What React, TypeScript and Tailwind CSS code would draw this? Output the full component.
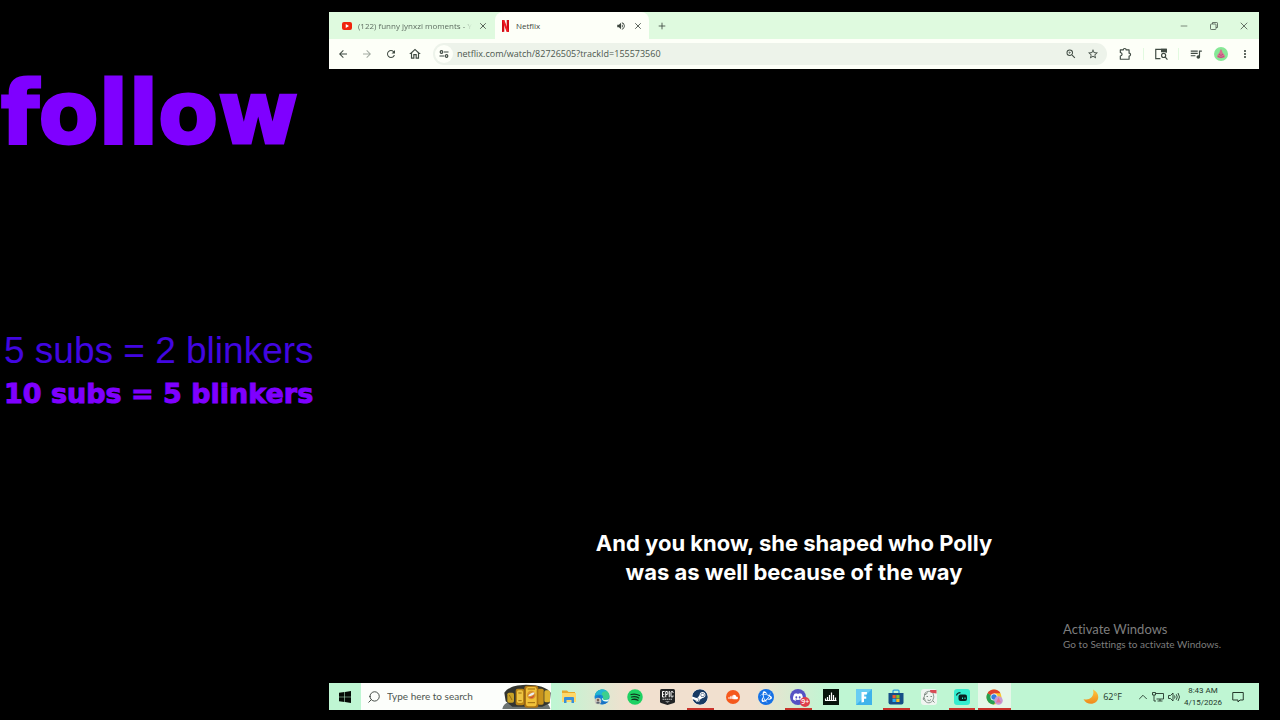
import type { ReactNode } from "react";
import {
  MdArrowBack,
  MdArrowForward,
  MdMoreVert,
  MdOutlineHome,
  MdQueueMusic,
  MdRefresh,
  MdStarBorder,
  MdVolumeUp,
  MdZoomIn,
} from "react-icons/md";
import { FaSoundcloud, FaSteam } from "react-icons/fa";
import { SiBattledotnet, SiDiscord } from "react-icons/si";
import { ChevronUp, Minus, Plus, Search, X } from "lucide-react";

type TaskbarApp = {
  name: string;
  icon: ReactNode;
  running?: boolean;
  active?: boolean;
};

function YoutubeIcon() {
  return (
    <svg viewBox="0 0 20 16" className="h-2 w-2.5 shrink-0">
      <rect width="20" height="16" rx="4" fill="#f0240c" />
      <path d="M7.5 4.2v7.6L14 8z" fill="#fff" />
    </svg>
  );
}

function NetflixIcon() {
  return (
    <svg viewBox="0 0 14 24" className="h-3 w-[7px] shrink-0">
      <path d="M0 0h4.6v23.4L0 24zM9.4 0H14v24l-4.6-.6z" fill="#d00a14" />
      <path d="M0 0h4.6L14 24l-4.8-.6z" fill="#f01a22" />
    </svg>
  );
}

function SiteInfoIcon() {
  return (
    <svg viewBox="0 0 20 20" className="size-2.5" fill="none" stroke="#3f4a42" strokeWidth="2.4">
      <circle cx="5" cy="6" r="2.6" />
      <path d="M10 6h9M1 14h9" />
      <circle cx="15" cy="14" r="2.6" />
    </svg>
  );
}

function ExtensionsIcon() {
  return (
    <svg viewBox="0 0 24 24" className="size-3.5" fill="none" stroke="#3f4a42" strokeWidth="2">
      <path d="M4 5h5a2.5 2.5 0 0 1 5 0h5v5.5a2.5 2.5 0 0 1 0 5V21H4v-5.5q3-.5 3-3t-3-3z" strokeLinejoin="round" />
    </svg>
  );
}

function SidePanelSearchIcon() {
  return (
    <svg viewBox="0 0 24 24" className="size-3.5" fill="none" stroke="#3f4a42" strokeWidth="2">
      <path d="M11 20H3V4h18v6" />
      <path d="M13 4h8v4h-8z" fill="#3f4a42" />
      <circle cx="16.5" cy="14.5" r="3.5" />
      <path d="m19 17 4 4.5" />
    </svg>
  );
}

function AvatarIcon() {
  return (
    <svg viewBox="0 0 28 28" className="size-3.5">
      <circle cx="14" cy="14" r="14" fill="#86e896" />
      <path d="M14 4c2 3 2.5 4.5 3 7 3 3 5 6 5 9-4 3-12 3-16 0 0-3 2-6 5-9 .5-2.5 1-4 3-7z" fill="#d9708f" />
      <path d="M10 14l4 3 4-3M8 19l6 2 6-2" stroke="#a94d78" strokeWidth="1.5" fill="none" />
    </svg>
  );
}

function RestoreIcon() {
  return (
    <svg viewBox="0 0 16 16" className="size-2" fill="none" stroke="#4a554c" strokeWidth="1.6">
      <rect x="1" y="4" width="11" height="11" rx="1.5" />
      <path d="M5 4V1h8.5q1.5 0 1.5 1.5V11h-3" />
    </svg>
  );
}

function WindowsIcon() {
  return (
    <svg viewBox="0 0 22 22" className="size-3">
      <path d="M0 3.2 10 2v8.5H0zM11 1.8 22 0v10.5H11zM0 11.5h10V20L0 18.8zM11 11.5H22V22l-11-1.8z" fill="#050a06" />
    </svg>
  );
}

function ChampionBelts() {
  return (
    <svg viewBox="0 0 150 75" className="h-[25px] w-[50px] shrink-0">
      <path d="M4 75c2-10 8-17 18-20h110c8 4 14 10 16 20z" fill="#6d7471" />
      <path d="M10 26C22 10 40 3 75 2c40 0 62 8 74 24l-3 32-22 10H34L14 52z" fill="#33352f" />
      <rect x="19" y="26" width="20" height="30" rx="5" fill="#c7a126" />
      <rect x="44" y="14" width="26" height="50" rx="6" fill="#b98314" />
      <rect x="48" y="19" width="18" height="38" rx="5" fill="#eec543" />
      <rect x="110" y="14" width="18" height="48" rx="5" fill="#c8931c" />
      <rect x="130" y="19" width="17" height="36" rx="5" fill="#dcb22f" />
      <rect x="70" y="5" width="42" height="66" rx="8" fill="#ad7412" />
      <rect x="75" y="9" width="32" height="58" rx="7" fill="#f1c23a" />
      <circle cx="91" cy="33" r="13" fill="#d9922e" />
      <path d="M81 37c6-9 12-12 20-11-2 7-9 10-20 11z" fill="#e9eef2" />
      <path d="M83 40c8 0 13-3 17-8 0 8-9 14-17 8z" fill="#cc4a35" />
      <path d="M80 56h22M80 15h22M52 50h10M52 27h10M25 33l8 15" stroke="#9a6a10" strokeWidth="3" />
    </svg>
  );
}

function ExplorerIcon() {
  return (
    <svg viewBox="0 0 32 32" className="size-4">
      <path d="M2 3h10l3 3h13v20H2z" fill="#e8a92c" />
      <path d="M2 8h28v18H2z" fill="#ffd868" />
      <path d="M6 28V18q0-2 2-2h16q2 0 2 2v10h-5v-6H11v6z" fill="#3a8fd8" />
    </svg>
  );
}

function EdgeIcon() {
  return (
    <svg viewBox="0 0 32 32" className="size-4">
      <circle cx="16" cy="16" r="15" fill="#1289d6" />
      <path d="M2 13C4 5 10 1 17 1c8 0 14 6 14 13 0 5-4 8-9 8-4 0-5-2-4-4 2-6-8-10-16-5z" fill="#3ccf8e" />
      <path d="M2 13C4 5 10 1 17 1c4 0 7 1 9 4-9-2-12 5-10 8-4-3-9-3-14 0z" fill="#22b5d5" />
      <path d="M14 13c-5 5 0 14 9 13 3 0 5-1 7-3-6 10-20 10-25 0-2-5 2-11 9-10z" fill="#1a72c4" />
      <path d="M18 18c-2 4 6 6 12 2l-1 4c-6 3-13 0-13-5z" fill="#eafaf2" />
      <circle cx="8" cy="24" r="6.5" fill="#c9c5bd" />
      <circle cx="8" cy="22" r="2.5" fill="#7b6455" />
      <path d="M4 28q4-6 8 0-4 3-8 0z" fill="#59646e" />
    </svg>
  );
}

function SpotifyIcon() {
  return (
    <svg viewBox="0 0 32 32" className="size-4">
      <circle cx="16" cy="16" r="15.5" fill="#1fd163" />
      <path
        d="M8 11q9-2.5 17 2M9 16q8-2 14.5 2M10 21q7-1.5 12 1.5"
        fill="none"
        stroke="#10351f"
        strokeWidth="2.5"
        strokeLinecap="round"
      />
    </svg>
  );
}

function EpicIcon() {
  return (
    <svg viewBox="0 0 30 32" className="h-4 w-[15px]">
      <path d="M3 0h24q3 0 3 3v22q0 2-2 3l-13 4-13-4q-2-1-2-3V3q0-3 3-3z" fill="#222426" />
      <path
        d="M9 5H5v11h4M5 10.5h3.5M11.5 16.5V5h2.5q1.5 0 1.5 2v2q0 2-1.5 2h-2M18.5 4v12.5M26 8V6.5Q26 5 24 5t-2 1.5v8q0 1.500 2 1.500t2-1.500V13"
        fill="none"
        stroke="#fff"
        strokeWidth="2"
      />
      <path d="M5 20.5h20" stroke="#c9cccd" strokeWidth="2" strokeDasharray="3 1" />
      <path d="M10 25h10l-5 2z" fill="#e3e5e5" />
    </svg>
  );
}

function DiscordIcon() {
  return (
    <span className="relative grid size-4 place-items-center rounded-full bg-[#5551c4]">
      <SiDiscord className="size-2.5 text-white" />
      <span className="absolute -right-1 -bottom-0.5 grid h-2.5 w-2.5 place-items-center rounded-full bg-[#df3f4b] text-[7px] leading-none font-semibold text-white">
        9+
      </span>
    </span>
  );
}

function EqualizerIcon() {
  return (
    <svg viewBox="0 0 32 32" className="size-4">
      <path d="M0 0h32v32H0z" fill="#07140c" />
      <path d="M5 23v-4M9 23v-7M13 23V12M17 23V7M21 23V12M25 23v-6" stroke="#fff" strokeWidth="2.4" />
      <path d="M4 23h23" stroke="#fff" strokeWidth="2" />
    </svg>
  );
}

function FortniteIcon() {
  return (
    <svg viewBox="0 0 32 32" className="size-4">
      <path d="M0 0h32v32H0z" fill="#3eb3ea" />
      <path d="M0 0h32L0 32z" fill="#68cdf3" />
      <path d="M11 6h11l-.5 5H16v4h4.5v4.5H16V26l-5 1z" fill="#fff" />
    </svg>
  );
}

function StoreIcon() {
  return (
    <svg viewBox="0 0 32 32" className="size-4">
      <path d="M10 9V4q0-2 2-2h8q2 0 2 2v5" fill="none" stroke="#2b9be0" strokeWidth="2.5" />
      <path d="M1 8h30v19q0 4-4 4H5q-4 0-4-4z" fill="#164f87" />
      <path d="M9 12h6.5v6.5H9z" fill="#ee5a2e" />
      <path d="M16.5 12H23v6.5h-6.5z" fill="#84c126" />
      <path d="M9 19.5h6.5V26H9z" fill="#2bb0ef" />
      <path d="M16.5 19.5H23V26h-6.5z" fill="#fbbd1e" />
    </svg>
  );
}

function FaceIcon() {
  return (
    <svg viewBox="0 0 32 32" className="size-4">
      <rect width="32" height="32" rx="6" fill="#f0f5f1" />
      <path d="M8 8q8-7 16 0 4 8-1 16-7 7-14 1-5-8-1-17z" fill="none" stroke="#6f7e75" strokeWidth="1.5" />
      <path
        d="M7 11q4 1 6-4M11 15h3M19 15h3M13 22q4 3 7-1M5 17q-2 4 2 6M24 24l3 3"
        fill="none"
        stroke="#55655b"
        strokeWidth="1.5"
      />
      <path d="M18 2h13v7l-12-2z" fill="#d84b55" />
    </svg>
  );
}

function StreamlabsIcon() {
  return (
    <svg viewBox="0 0 32 32" className="size-4">
      <rect width="32" height="32" rx="6" fill="#35edcf" />
      <path d="M5 13q1-6 8-6" fill="none" stroke="#0b2a27" strokeWidth="2.5" />
      <rect x="9" y="11" width="17" height="13" rx="4" fill="#0a1f20" />
      <path d="M17 17v3M22 17v3" stroke="#35edcf" strokeWidth="2" />
    </svg>
  );
}

function ChromeIcon() {
  return (
    <svg viewBox="0 0 34 32" className="h-4 w-[17px]">
      <circle cx="16" cy="16" r="15" fill="#fbc62c" />
      <path d="M16 16 3 8.5A15 15 0 0 1 29 8.5H16z" fill="#e0402f" />
      <path d="M3 8.5A15 15 0 0 0 16 31l6.5-11.5L16 16z" fill="#27a052" />
      <circle cx="16" cy="16" r="7" fill="#fff" />
      <circle cx="16" cy="16" r="5.5" fill="#357de0" />
      <circle cx="25" cy="23" r="8.5" fill="#c79ad4" />
      <path d="M25 17l5 10H20z" fill="#e8719a" />
    </svg>
  );
}

function MoonIcon() {
  return (
    <svg viewBox="0 0 32 32" className="size-4">
      <defs>
        <linearGradient id="moon" x1="0" y1="0" x2="0" y2="1">
          <stop offset="0" stopColor="#ffc83f" />
          <stop offset="1" stopColor="#ee8a1b" />
        </linearGradient>
      </defs>
      <path d="M20 1c11 5 14 18 6 25-7 6-20 5-25-6 11 4 23-4 19-19z" fill="url(#moon)" />
    </svg>
  );
}

function NetworkIcon() {
  return (
    <svg viewBox="0 0 24 24" className="size-3" fill="none" stroke="#24382b" strokeWidth="1.8">
      <path d="M8 5h15v11H9M16 16v4M11 20h10" />
      <path d="M1 3h6v5H1zM4 8v12h4" />
    </svg>
  );
}

function SpeakerIcon() {
  return (
    <svg viewBox="0 0 24 24" className="size-3" fill="none" stroke="#24382b" strokeWidth="1.8">
      <path d="M1 9h4l5-5v16l-5-5H1z" />
      <path d="M13 9q2 3 0 6M16.5 6.5q4 5.5 0 11M20 4q6 8 0 16" />
    </svg>
  );
}

function NotificationIcon() {
  return (
    <svg viewBox="0 0 24 24" className="size-3" fill="none" stroke="#24382b" strokeWidth="2">
      <path d="M1.5 3h21v15H16l-4 4v-4H1.5z" />
    </svg>
  );
}

const apps: TaskbarApp[] = [
  { name: "File Explorer", icon: <ExplorerIcon /> },
  { name: "Microsoft Edge", icon: <EdgeIcon /> },
  { name: "Spotify", icon: <SpotifyIcon /> },
  { name: "Epic Games", icon: <EpicIcon /> },
  {
    name: "Steam",
    icon: <FaSteam className="size-4 rounded-full bg-white text-[#173a64]" />,
    running: true,
  },
  {
    name: "SoundCloud",
    icon: (
      <span className="grid size-3.5 place-items-center rounded-full bg-[#f5581c]">
        <FaSoundcloud className="size-2.5 text-white" />
      </span>
    ),
  },
  {
    name: "Battle.net",
    icon: (
      <span className="grid size-4 place-items-center rounded-full bg-[#1672e6]">
        <SiBattledotnet className="size-3 text-white" />
      </span>
    ),
  },
  { name: "Discord", icon: <DiscordIcon />, running: true },
  { name: "Equalizer", icon: <EqualizerIcon /> },
  { name: "Fortnite", icon: <FortniteIcon /> },
  { name: "Microsoft Store", icon: <StoreIcon />, running: true },
  { name: "Sketch", icon: <FaceIcon /> },
  { name: "Streamlabs", icon: <StreamlabsIcon />, running: true },
  { name: "Google Chrome", icon: <ChromeIcon />, running: true, active: true },
];

function TabStrip() {
  return (
    <div className="flex h-[27px] bg-[#dffadf] text-[8px] text-[#3d473f]">
      <div className="flex w-[166px] items-center gap-1.5 pr-2.5 pl-[13px]">
        <YoutubeIcon />
        <span className="flex-1 whitespace-nowrap text-[#5f6e62] [mask-image:linear-gradient(to_right,black_92%,transparent)]">
          (122) funny jynxzi moments - Y
        </span>
        <button aria-label="Close YouTube tab">
          <X className="size-2.5" />
        </button>
      </div>
      <div className="flex w-[154px] items-center gap-[7px] rounded-t-lg bg-[#fdfff8] pr-1.5 pl-[7px]">
        <NetflixIcon />
        <span className="flex-1">Netflix</span>
        <button aria-label="Mute tab">
          <MdVolumeUp className="size-2.5" />
        </button>
        <button aria-label="Close Netflix tab">
          <X className="size-2.5" />
        </button>
      </div>
      <button aria-label="New tab" className="grid w-[26px] place-items-center">
        <Plus className="size-2.5" />
      </button>
      <div className="ml-auto flex">
        <button aria-label="Minimize" className="grid w-[30px] place-items-center">
          <Minus className="size-2.5" strokeWidth={1.5} />
        </button>
        <button aria-label="Restore" className="grid w-[30px] place-items-center">
          <RestoreIcon />
        </button>
        <button aria-label="Close window" className="grid w-[30px] place-items-center">
          <X className="size-3" strokeWidth={1.5} />
        </button>
      </div>
    </div>
  );
}

function Toolbar() {
  return (
    <div className="flex h-[30px] items-center bg-[#fdfff8] pr-0.5 pl-0.5 text-[#3f4a42]">
      <button aria-label="Back" className="grid w-6 place-items-center">
        <MdArrowBack className="size-3" />
      </button>
      <button aria-label="Forward" className="grid w-6 place-items-center text-[#a3aba2]">
        <MdArrowForward className="size-3" />
      </button>
      <button aria-label="Reload" className="grid w-6 place-items-center">
        <MdRefresh className="size-3" />
      </button>
      <button aria-label="Home" className="grid w-6 place-items-center">
        <MdOutlineHome className="size-3.5" />
      </button>
      <div className="ml-1.5 flex h-[22px] flex-1 items-center rounded-full bg-[#edf3ea] pr-2 pl-0.5">
        <button aria-label="Site information" className="grid size-[18px] place-items-center rounded-full bg-[#fdfff8]">
          <SiteInfoIcon />
        </button>
        <input
          aria-label="Address"
          className="ml-1 min-w-0 flex-1 bg-transparent text-[9px] text-[#4c574e] outline-none"
          defaultValue="netflix.com/watch/82726505?trackId=155573560"
        />
        <button aria-label="Zoom">
          <MdZoomIn className="size-3" />
        </button>
        <button aria-label="Bookmark" className="ml-2.5">
          <MdStarBorder className="size-3" />
        </button>
      </div>
      <button aria-label="Extensions" className="grid w-9 place-items-center">
        <ExtensionsIcon />
      </button>
      <span className="h-3 w-px bg-[#e2fae0]" />
      <button aria-label="Side panel" className="grid w-[34px] place-items-center">
        <SidePanelSearchIcon />
      </button>
      <span className="h-3 w-px bg-[#e2fae0]" />
      <button aria-label="Media controls" className="grid w-[30px] place-items-center pl-1">
        <MdQueueMusic className="size-3.5" />
      </button>
      <button aria-label="Profile" className="grid w-6 place-items-center">
        <AvatarIcon />
      </button>
      <button aria-label="Menu" className="grid w-6 place-items-center">
        <MdMoreVert className="size-3" />
      </button>
    </div>
  );
}

function Player() {
  return (
    <main className="relative flex flex-1 flex-col justify-end bg-black pb-24">
      <p className="text-center font-['Inter',sans-serif] text-[22px] leading-[29px] font-bold text-white">
        And you know, she shaped who Polly
        <br />
        was as well because of the way
      </p>
      <div className="absolute right-[38px] bottom-8 font-['Lato',sans-serif] text-[#7d7d7d] [font-variant-ligatures:none]">
        <p className="text-[13px] leading-4">Activate Windows</p>
        <p className="text-[10px] leading-[14px]">Go to Settings to activate Windows.</p>
      </div>
    </main>
  );
}

function Taskbar() {
  return (
    <footer className="flex h-[27px] bg-[linear-gradient(to_right,#bff6d3_0,#bff6d3_225px,#f1e0cf_300px,#f1e0cf_425px,#bff6d3_500px)] text-[#24382b]">
      <button aria-label="Start" className="grid w-8 place-items-center">
        <WindowsIcon />
      </button>
      <label className="flex w-[190px] items-center bg-[#fcfefb] pl-1.5">
        <Search className="size-3.5 text-[#303832] -scale-x-100" strokeWidth={1.5} />
        <input
          aria-label="Search"
          placeholder="Type here to search"
          className="ml-1.5 min-w-0 flex-1 bg-transparent font-['Lato',sans-serif] text-[10px] outline-none placeholder:text-[#4e5650]"
        />
        <ChampionBelts />
      </label>
      <nav className="ml-0.5 grid w-[458px] grid-cols-14">
        {apps.map((app) => (
          <button
            key={app.name}
            aria-label={app.name}
            className={`relative grid place-items-center ${app.active ? "bg-[#e6f7e9]" : ""}`}
          >
            {app.icon}
            {app.running && (
              <span className={`absolute bottom-0 h-0.5 bg-[#c9332c] ${app.active ? "inset-x-0" : "inset-x-[3px]"}`} />
            )}
          </button>
        ))}
      </nav>
      <div className="ml-auto flex items-center pr-[15px]">
        <button className="flex items-center gap-1 text-[9px]">
          <MoonIcon />
          62°F
        </button>
        <button aria-label="Show hidden icons" className="ml-3.5">
          <ChevronUp className="size-3.5" strokeWidth={1.5} />
        </button>
        <button aria-label="Network" className="ml-0.5">
          <NetworkIcon />
        </button>
        <button aria-label="Volume" className="ml-1">
          <SpeakerIcon />
        </button>
        <button className="ml-1 text-center font-['Roboto',sans-serif] text-[8px] leading-3">
          8:43 AM
          <br />
          4/15/2026
        </button>
        <button aria-label="Notifications" className="ml-2.5">
          <NotificationIcon />
        </button>
      </div>
    </footer>
  );
}

export default function App() {
  return (
    <div className="flex min-h-screen bg-black font-['Open_Sans',sans-serif]">
      <aside className="w-[329px] shrink-0 pt-[60px] font-['DejaVu_Sans',sans-serif] whitespace-nowrap text-[#7f00ff]">
        <h1 className="pl-px text-[87px] leading-[106px] font-bold [-webkit-text-stroke:3px_#7f00ff]">follow</h1>
        <p className="mt-[163px] pl-1 font-['Liberation_Sans',Arial,sans-serif] text-[37px] leading-[44px] text-[#4206e0]">
          5 subs = 2 blinkers
        </p>
        <p className="pl-1 text-[27px] leading-[42px] font-bold [-webkit-text-stroke:1px_#7f00ff]">
          10 subs = 5 blinkers
        </p>
      </aside>
      <div className="mt-3 mr-[21px] mb-2.5 flex min-w-0 flex-1 flex-col">
        <TabStrip />
        <Toolbar />
        <Player />
        <Taskbar />
      </div>
    </div>
  );
}
